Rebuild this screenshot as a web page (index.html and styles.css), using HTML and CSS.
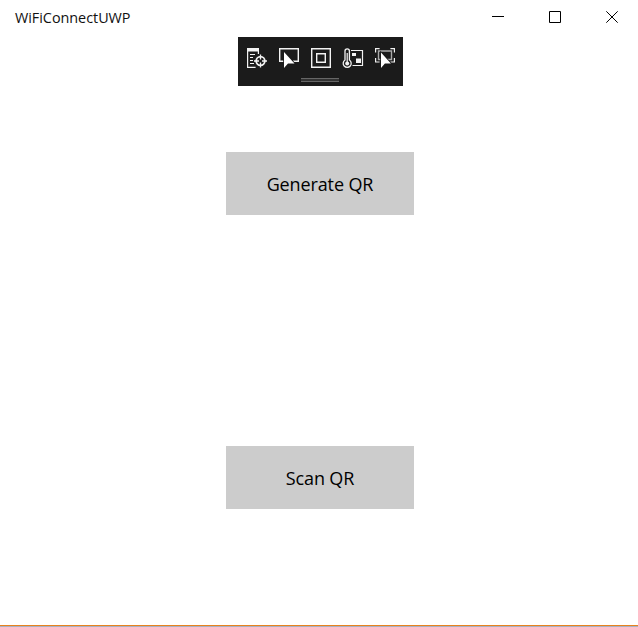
FILE: index.html
```html
<!DOCTYPE html>
<html lang="en">
<head>
<meta charset="utf-8">
<title>WiFiConnectUWP</title>
<link rel="stylesheet" href="styles.css">
</head>
<body>
<div class="window">
  <header class="titlebar">
    <h1 class="title">WiFiConnectUWP</h1>
    <div class="controls">
      <svg viewBox="0 0 12 12"><path d="M0 5.5h12"/></svg>
      <svg viewBox="0 0 12 12"><path d="M.5.5h11v11H.5z"/></svg>
      <svg viewBox="0 0 12 12"><path d="M.3.3l11.4 11.4M11.7.3L.3 11.7"/></svg>
    </div>
  </header>
  <div class="debugbar">
    <div class="tools">
      <svg viewBox="0 0 20 20"><path class="fill" d="M0 0h12v3.500H0z"/><path d="M.6 0v19.400h8M11.400 3v3" stroke-width="1.200"/><path d="M3 6.500h5M3 9.500h3M3 12.500h3M3 15.500h4"/><circle cx="13.500" cy="13" r="4.300" stroke-width="1.800"/><path d="M13.500 6.500v5M13.500 14.500v5M7 13h5M15 13h5" stroke-width="1.300"/></svg>
      <svg viewBox="0 0 20 20"><path d="M5.500 13.300H.7V.7h18.600v12.600H14" stroke-width="1.400"/><path class="pointer" d="M5 4v16l4-4.500h6.500z"/></svg>
      <svg viewBox="0 0 20 20"><path d="M.7.7h18.600v18.600H.7zM5.700 5.700h8.600v8.600H5.700z" stroke-width="1.400"/></svg>
      <svg viewBox="0 0 20 20"><path d="M2 12V3a2.200 2.200 0 0 1 4.400 0v9a4 4 0 1 1-4.400 0z" stroke-width="1.300"/><path d="M4.200 5v9" stroke-width="1.200"/><circle class="fill" cx="4.200" cy="15.500" r="2"/><path d="M8 2.500h11.500v15H9.500" stroke-width="1.200"/><path class="fill" d="M9 5h4v3H9zM13 10.500h5v4.500h-5z"/></svg>
      <svg viewBox="0 0 20 20"><path d="M.6 4.500V.6h4M15.400 .6h4v3.900M.6 10v4h4M15.400 14h4v-4" stroke-width="1.200"/><path class="dim" d="M3.500 3h13v8.500h-13z"/><path class="pointer" d="M6 4.500V20l3.900-4.500h6z"/></svg>
    </div>
    <div class="grip"></div>
  </div>
  <main class="actions">
    <button class="action">Generate QR</button>
    <button class="action">Scan QR</button>
  </main>
</div>
</body>
</html>
```

FILE: styles.css
```css
* { box-sizing: border-box; }
body { margin: 0; background: #fff; color: #000; font-family: "Segoe UI", "Open Sans", "Noto Sans", sans-serif; }
.window { height: 627px; display: flex; flex-direction: column; align-items: center; border-bottom: 1px solid #a9b2c3; box-shadow: inset 0 -1px #e8821e; }
.titlebar { width: 100%; height: 37px; display: flex; justify-content: space-between; align-items: flex-start; padding: 8px 20px 0 15px; }
.title { margin: 0; font-size: 14.4px; line-height: 20px; font-weight: 400; letter-spacing: -.03px; color: #111; }
.controls { display: flex; gap: 45px; padding-top: 3px; }
.controls svg { width: 12px; height: 12px; }
svg { display: block; fill: none; stroke: #000; }
.debugbar { width: 165px; height: 49px; margin-left: 3px; background: #1b1b1b; padding: 11px 8px 0 9px; }
.tools { display: flex; gap: 12px; }
.tools svg { width: 20px; height: 20px; stroke: #f2f2f2; overflow: visible; }
.tools .fill { fill: #f2f2f2; stroke: none; }
.tools .dim { stroke: #aaa; stroke-width: 1.4; }
.tools .pointer { fill: #fff; stroke: #1b1b1b; stroke-width: 1.6; paint-order: stroke; }
.grip { width: 38px; height: 4px; margin: 10px 0 0 54px; border: solid #666; border-width: 1px 0; background: #333; }
.actions { display: flex; flex-direction: column; gap: 231px; margin: 66px 0 0 2px; }
.action { width: 188px; height: 63px; padding: 0; border: 0; background: #ccc; color: #000; font: 18px/24px "Segoe UI", "Open Sans", "Noto Sans", sans-serif; letter-spacing: -.12px; }
```
